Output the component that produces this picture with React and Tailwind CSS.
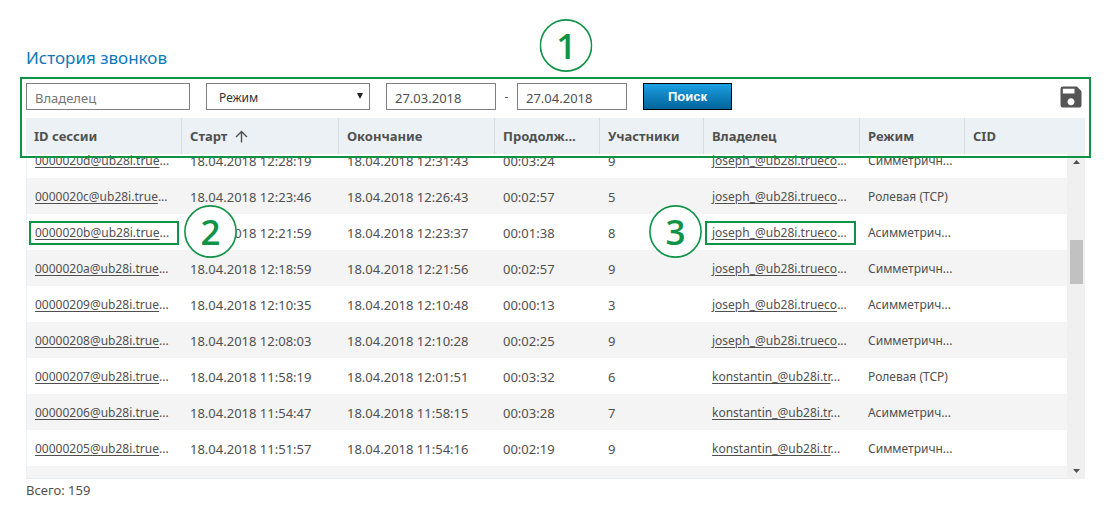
import React, { useEffect, useRef, useState } from 'react';
import { MdSave } from 'react-icons/md';

const calls = [
  { id: '0000020d', start: '18.04.2018 12:28:19', end: '18.04.2018 12:31:43', duration: '00:03:24', members: 9, owner: 'joseph_@ub28i.trueco', mode: 'Симметричн...' },
  { id: '0000020c', start: '18.04.2018 12:23:46', end: '18.04.2018 12:26:43', duration: '00:02:57', members: 5, owner: 'joseph_@ub28i.trueco', mode: 'Ролевая (TCP)' },
  { id: '0000020b', start: '18.04.2018 12:21:59', end: '18.04.2018 12:23:37', duration: '00:01:38', members: 8, owner: 'joseph_@ub28i.trueco', mode: 'Асимметрич...', marked: true },
  { id: '0000020a', start: '18.04.2018 12:18:59', end: '18.04.2018 12:21:56', duration: '00:02:57', members: 9, owner: 'joseph_@ub28i.trueco', mode: 'Симметричн...' },
  { id: '00000209', start: '18.04.2018 12:10:35', end: '18.04.2018 12:10:48', duration: '00:00:13', members: 3, owner: 'joseph_@ub28i.trueco', mode: 'Асимметрич...' },
  { id: '00000208', start: '18.04.2018 12:08:03', end: '18.04.2018 12:10:28', duration: '00:02:25', members: 9, owner: 'joseph_@ub28i.trueco', mode: 'Симметричн...' },
  { id: '00000207', start: '18.04.2018 11:58:19', end: '18.04.2018 12:01:51', duration: '00:03:32', members: 6, owner: 'konstantin_@ub28i.tr', mode: 'Ролевая (TCP)' },
  { id: '00000206', start: '18.04.2018 11:54:47', end: '18.04.2018 11:58:15', duration: '00:03:28', members: 7, owner: 'konstantin_@ub28i.tr', mode: 'Асимметрич...' },
  { id: '00000205', start: '18.04.2018 11:51:57', end: '18.04.2018 11:54:16', duration: '00:02:19', members: 9, owner: 'konstantin_@ub28i.tr', mode: 'Симметричн...' },
];

const columns = [
  { title: 'ID сессии', width: 'w-[156px]' },
  { title: 'Старт', width: 'w-[157px]', sorted: true },
  { title: 'Окончание', width: 'w-[156px]' },
  { title: 'Продолж...', width: 'w-[105px]' },
  { title: 'Участники', width: 'w-[104px]' },
  { title: 'Владелец', width: 'w-[156px]' },
  { title: 'Режим', width: 'w-[105px]' },
  { title: 'CID', width: '' },
];

const Marker = ({ number, className }) => (
  <div className={`absolute z-10 flex size-[53px] items-center justify-center ${className}`}>
    <svg viewBox="0 0 53 53" className="absolute inset-0 size-full" aria-hidden="true">
      <circle cx="26.5" cy="26.5" r="25.6" fill="#fff" stroke="#0f9347" strokeWidth="1.6" />
    </svg>
    <span className="relative font-['Open_Sans',sans-serif] text-[35px] leading-none font-semibold text-[#0f9347]">
      {number}
    </span>
  </div>
);

const CellLink = ({ text }) => (
  <>
    <a href="#" className="underline underline-offset-2">{text}</a>...
  </>
);

const Filters = () => {
  const [owner, setOwner] = useState('');
  const [from, setFrom] = useState('27.03.2018');
  const [to, setTo] = useState('27.04.2018');

  return (
    <form className="flex items-center gap-4" onSubmit={(e) => e.preventDefault()}>
      <input
        aria-label="Владелец"
        placeholder="Владелец"
        value={owner}
        onChange={(e) => setOwner(e.target.value)}
        className="h-[27px] w-[164px] border border-[#7f7f7f] px-2 pt-0.5 text-[13px] placeholder:text-[#757575]"
      />
      <div className="relative">
        <select
          aria-label="Режим"
          className="h-[27px] w-[164px] appearance-none border border-[#7f7f7f] bg-white px-3 pt-0.5 text-[#333]"
        >
          <option>Режим</option>
        </select>
        <svg viewBox="0 0 6 6" className="pointer-events-none absolute top-[10px] right-[7px] size-1.5" aria-hidden="true">
          <path d="M0 0h6L3 6z" fill="#222" />
        </svg>
      </div>
      <div className="flex items-center">
        <input
          aria-label="Дата с"
          value={from}
          onChange={(e) => setFrom(e.target.value)}
          className="h-[27px] w-[110px] border border-[#7f7f7f] px-2 pt-0.5 text-[13px]"
        />
        <span className="w-[21px] text-center">-</span>
        <input
          aria-label="Дата по"
          value={to}
          onChange={(e) => setTo(e.target.value)}
          className="h-[27px] w-[110px] border border-[#7f7f7f] px-2 pt-0.5 text-[13px]"
        />
      </div>
      <button
        type="submit"
        className="h-[27px] w-[89px] border border-black bg-linear-to-b from-[#1ba0e3] to-[#03649b] font-['Liberation_Sans',sans-serif] text-[13px] font-bold text-white"
      >
        Поиск
      </button>
      <button type="button" aria-label="Сохранить" className="ml-auto">
        <MdSave className="-my-1 size-7 text-[#555]" />
      </button>
    </form>
  );
};

const ScrollBar = () => (
  <div className="absolute top-9 right-0 bottom-0 z-10 flex w-[18px] flex-col items-center justify-between bg-[#f0f0f0] py-1.5">
    <svg viewBox="0 0 7 4" className="h-1 w-[7px]" aria-hidden="true">
      <path d="M0 4h7L3.5 0z" fill="#505050" />
    </svg>
    <div className="absolute top-[86px] h-11 w-[13px] bg-[#c1c1c1]" />
    <svg viewBox="0 0 7 4" className="h-1 w-[7px]" aria-hidden="true">
      <path d="M0 0h7L3.5 4z" fill="#505050" />
    </svg>
  </div>
);

const CallsTable = () => {
  const scroller = useRef(null);

  // The list opens slightly scrolled, under the sticky header
  useEffect(() => {
    scroller.current.scrollTop = 12;
  }, []);

  return (
    <div className="relative mt-2">
      <div ref={scroller} className="h-[361px] overflow-hidden border-b border-[#e3edf3]">
        <table className="w-full table-fixed border-separate border-spacing-0 text-left">
          <thead className="sticky top-0 z-20">
            <tr className="h-9 bg-[#ecf1f5]">
              {columns.map((column) => (
                <th
                  key={column.title}
                  className={`${column.width} border-r border-[#d5dde0] px-2 text-[13px] font-bold whitespace-nowrap last:border-r-0`}
                >
                  <span className="flex items-center gap-2">
                    {column.title}
                    {column.sorted && (
                      <svg viewBox="0 0 13 13" className="size-[13px]" fill="none" stroke="#505050" strokeWidth="1.4" aria-hidden="true">
                        <path d="M6.5 12.5V1.5M1 7l5.5-5.5L12 7" />
                      </svg>
                    )}
                  </span>
                </th>
              ))}
            </tr>
          </thead>
          <tbody className="whitespace-nowrap [&_td]:px-2 [&_td]:pt-0.5 [&_td]:first:border-l [&_td]:first:border-[#ecf1f5]">
            {calls.map((call) => (
              <tr key={call.id} className="h-9 even:bg-[#f4f4f4]">
                <td className="relative">
                  <CellLink text={`${call.id}@ub28i.true`} />
                  {call.marked && (
                    <>
                      <div className="absolute top-[7px] left-[2px] h-6 w-[150px] border-2 border-[#0f9347]" />
                      <Marker number={2} className="-top-[9px] left-[157px]" />
                    </>
                  )}
                </td>
                <td className="text-[13px]">{call.start}</td>
                <td className="text-[13px]">{call.end}</td>
                <td className="text-[13px]">{call.duration}</td>
                <td className="text-[13px]">{call.members}</td>
                <td className="relative">
                  <CellLink text={call.owner} />
                  {call.marked && (
                    <>
                      <div className="absolute top-[7px] left-px h-6 w-[151px] border-2 border-[#0f9347]" />
                      <Marker number={3} className="-top-[9px] right-[158px]" />
                    </>
                  )}
                </td>
                <td>{call.mode}</td>
                <td />
              </tr>
            ))}
            <tr className="h-9 even:bg-[#f4f4f4]">
              <td colSpan={8} />
            </tr>
          </tbody>
        </table>
      </div>
      <ScrollBar />
    </div>
  );
};

const App = () => {
  return (
    <main className="min-h-screen bg-white px-[26px] pt-[46px] font-['Noto_Sans',sans-serif] text-[12px] leading-4 text-[#505050]">
      <h1 className="text-[17px] leading-6 text-[#0f78b8]">История звонков</h1>
      <section className="relative mt-[13px]">
        <Filters />
        <CallsTable />
        <div className="pointer-events-none absolute -inset-x-1.5 -top-1.5 z-30 h-[81px] border-2 border-[#0f9347]">
          <Marker number={1} className="-top-[60px] left-[51%] -translate-x-1/2" />
        </div>
      </section>
      <p className="mt-[3px] text-[13px]">Всего: 159</p>
    </main>
  );
};

export default App;
